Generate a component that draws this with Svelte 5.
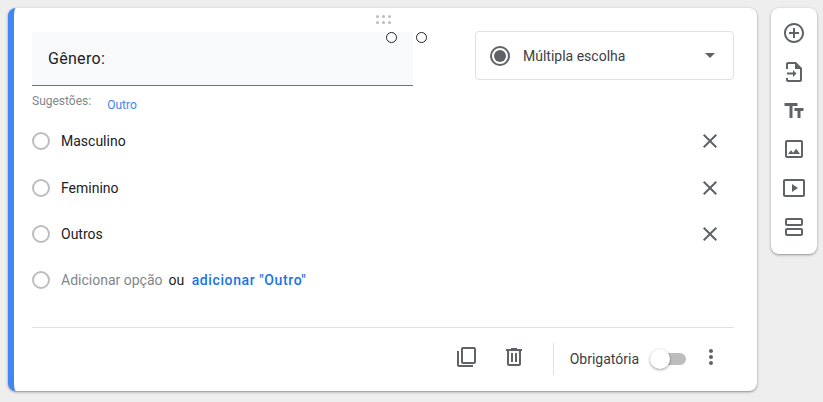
<script>
  const options = ['Masculino', 'Feminino', 'Outros'];
</script>

<div class="page">
  <section class="card">
    <span class="handle" aria-hidden="true">
      {#each Array(6) as _}<i></i>{/each}
    </span>
    <span class="knob k1"></span>
    <span class="knob k2"></span>

    <div class="top">
      <div class="left">
        <div class="title">Gênero:</div>
        <div class="hints"><span class="sug">Sugestões:</span><span class="out">Outro</span></div>
      </div>
      <div class="select">
        <span class="radio-on"><i></i></span>
        <span class="sel-text">Múltipla escolha</span>
        <span class="caret"></span>
      </div>
    </div>

    <div class="options">
      {#each options as o}
        <div class="row">
          <span class="radio"></span>
          <span class="label">{o}</span>
          <svg class="x" width="24" height="24" viewBox="0 0 24 24"><path fill="#5f6368" d="M19 6.41 17.59 5 12 10.59 6.41 5 5 6.41 10.59 12 5 17.59 6.41 19 12 13.41 17.59 19 19 17.59 13.41 12z"/></svg>
        </div>
      {/each}
      <div class="row">
        <span class="radio"></span>
        <span class="label add">Adicionar opção</span>
        <span class="label ou">ou</span>
        <span class="label link">adicionar "Outro"</span>
      </div>
    </div>

    <div class="footer">
      <svg width="24" height="24" viewBox="0 0 24 24"><path fill="#5f6368" d="M9 2h11c1.100 0 2 .9 2 2v13c0 1.100-.9 2-2 2H9c-1.100 0-2-.9-2-2V4c0-1.100.9-2 2-2zm0 2v13h11V4H9zM3 6h2v14h14v2H5c-1.100 0-2-.9-2-2V6z"/></svg>
      <svg class="trash" width="24" height="24" viewBox="0 0 24 24"><path fill="#5f6368" d="M15 4V3H9v1H4v2h1v13c0 1.100.9 2 2 2h10c1.100 0 2-.9 2-2V6h1V4h-5zm2 15H7V6h10v13zM9 8h2v9H9zm4 0h2v9h-2z"/></svg>
      <span class="sep"></span>
      <span class="req">Obrigatória</span>
      <span class="switch"><i></i></span>
      <svg class="more" width="24" height="24" viewBox="0 0 24 24"><path fill="#5f6368" d="M12 8c1.100 0 2-.9 2-2s-.9-2-2-2-2 .9-2 2 .9 2 2 2zm0 2c-1.100 0-2 .9-2 2s.9 2 2 2 2-.9 2-2-.9-2-2-2zm0 6c-1.100 0-2 .9-2 2s.9 2 2 2 2-.9 2-2-.9-2-2-2z"/></svg>
    </div>
  </section>

  <aside class="tools">
    <svg width="24" height="24" viewBox="0 0 24 24"><path fill="#5f6368" d="M13 7h-2v4H7v2h4v4h2v-4h4v-2h-4V7zm-1-5C6.480 2 2 6.480 2 12s4.480 10 10 10 10-4.480 10-10S17.520 2 12 2zm0 18c-4.410 0-8-3.590-8-8s3.590-8 8-8 8 3.590 8 8-3.590 8-8 8z"/></svg>
    <svg width="24" height="24" viewBox="0 0 24 24"><path fill="#5f6368" d="M14 2H6c-1.100 0-2 .9-2 2v5h2V4h7v5h5v11H6v-2H4v2c0 1.100.9 2 2 2h12c1.100 0 2-.9 2-2V8l-6-6zM11 12.500H5v2h6V17l3.500-3.500L11 10v2.500z"/></svg>
    <svg width="24" height="24" viewBox="0 0 24 24"><path fill="#5f6368" d="M2.500 4v3h5v12h3V7h5V4h-13zm19 5h-9v3h3v7h3v-7h3V9z"/></svg>
    <svg width="24" height="24" viewBox="0 0 24 24"><path fill="#5f6368" d="M19 5v14H5V5h14m0-2H5c-1.100 0-2 .9-2 2v14c0 1.100.9 2 2 2h14c1.100 0 2-.9 2-2V5c0-1.100-.9-2-2-2zm-4.860 8.860-3 3.870L9 13.140 6 17h12l-3.860-5.140z"/></svg>
    <svg width="24" height="24" viewBox="0 0 24 24"><path fill="#5f6368" d="M10 8v8l6-4-6-4zm11-5H3c-1.100 0-2 .9-2 2v14c0 1.100.9 2 2 2h18c1.100 0 2-.9 2-2V5c0-1.100-.9-2-2-2zm0 16H3V5h18v14z"/></svg>
    <svg width="24" height="24" viewBox="0 0 24 24"><path fill="#5f6368" d="M19 13H5c-1.100 0-2 .9-2 2v4c0 1.100.9 2 2 2h14c1.100 0 2-.9 2-2v-4c0-1.100-.9-2-2-2zm0 6H5v-4h14v4zM19 3H5c-1.100 0-2 .9-2 2v4c0 1.100.9 2 2 2h14c1.100 0 2-.9 2-2V5c0-1.100-.9-2-2-2zm0 6H5V5h14v4z"/></svg>
  </aside>
</div>

<style>
  :global(body) { margin: 0; background: #eeeeee; }
  .page {
    width: 823px; height: 402px; box-sizing: border-box; padding: 8px 6px 0 8px;
    display: flex; align-items: flex-start; gap: 14px;
    font-family: Roboto, "Liberation Sans", sans-serif; overflow: hidden;
  }
  .card {
    position: relative; width: 749px; height: 383px; box-sizing: border-box; flex: none;
    background: #fff; border-radius: 8px; border-left: 6px solid #4285f4;
    box-shadow: 0 1px 2px rgba(60,64,67,.45), 0 1px 3px 1px rgba(60,64,67,.1);
    padding: 23px 23px 0 18px; display: flex; flex-direction: column;
  }
  .handle { position: absolute; left: 362px; top: 7px; width: 15px; display: grid; grid-template-columns: repeat(3, 3px); gap: 3px; }
  .handle i { width: 3px; height: 3px; background: #bdbdbd; border-radius: 50%; }
  .knob { position: absolute; width: 9px; height: 9px; border: 1px solid #222; border-radius: 50%; background: #fff; top: 24px; }
  .k1 { left: 372px; }
  .k2 { left: 402px; }
  .top { display: flex; justify-content: space-between; align-items: flex-start; height: 88px; }
  .left { width: 381px; padding-top: 1px; }
  .title {
    height: 54px; box-sizing: border-box; background: #f8f9fa; border-bottom: 1px solid #70757a;
    padding-left: 16px; display: flex; align-items: center; font-size: 16px; color: #202124; letter-spacing: .3px;
  }
  .hints { display: flex; gap: 16px; font-size: 12px; }
  .sug { color: #80868b; margin-top: 8px; }
  .out { color: #4285f4; margin-top: 12px; }
  .select {
    width: 259px; height: 49px; box-sizing: border-box; border: 1px solid #e0e0e0; border-radius: 4px;
    display: flex; align-items: center; padding: 0 18px 0 14px; font-size: 14px; color: #3c4043;
  }
  .radio-on { width: 20px; height: 20px; box-sizing: border-box; border: 2px solid #5f6368; border-radius: 50%; display: flex; align-items: center; justify-content: center; }
  .radio-on i { width: 12px; height: 12px; background: #5f6368; border-radius: 50%; }
  .sel-text { margin-left: 13px; flex: 1; }
  .caret { border: 5px solid transparent; border-top-color: #5f6368; border-bottom: 0; }
  .options { display: flex; flex-direction: column; margin-top: -1px; }
  .row { height: 46.4px; display: flex; align-items: center; font-size: 14px; color: #202124; }
  .radio { width: 18px; height: 18px; box-sizing: border-box; border: 2px solid #bdbdbd; border-radius: 50%; margin-right: 11px; flex: none; }
  .label { white-space: nowrap; }
  .add { color: #80868b; }
  .ou { margin-left: 6px; }
  .link { margin-left: 7.500px; color: #1a73e8; font-weight: 500; letter-spacing: .6px; }
  .x { margin-left: auto; margin-right: 12px; }
  .footer {
    margin-top: 23px; border-top: 1px solid #e0e0e0; flex: 1; display: flex; align-items: center; padding: 0 11px 0 0;
    justify-content: flex-end; font-size: 14px; color: #3c4043;
  }
  .footer svg { margin-bottom: 5px; }
  .trash { margin-left: 24px; }
  .sep { width: 1px; height: 32px; background: #e0e0e0; margin: 0 16px 0 27px; }
  .req { margin-right: 11px; }
  .switch { position: relative; width: 36px; height: 12px; margin-right: 13px; display: flex; align-items: center; }
  .switch::before { content: ""; position: absolute; left: 8px; right: 0; top: 0; bottom: 0; background: #bdbdbd; border-radius: 6px; }
  .switch i { position: relative; width: 20px; height: 20px; flex: none; background: #fff; border-radius: 50%; box-shadow: 0 1px 3px rgba(0,0,0,.4); }
  .tools {
    width: 46px; height: 246px; background: #fff; border-radius: 8px; flex: none;
    box-shadow: 0 1px 2px rgba(60,64,67,.4), 0 1px 3px 1px rgba(60,64,67,.1);
    display: flex; flex-direction: column; align-items: center; box-sizing: border-box; padding-top: 13px; gap: 14.8px;
  }
  svg { display: block; flex: none; }
</style>
